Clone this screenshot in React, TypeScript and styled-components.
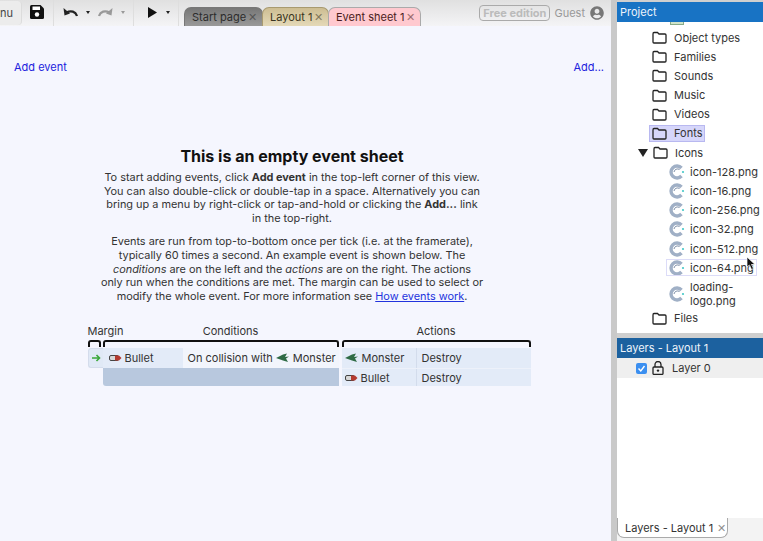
import React from 'react';
import styled, { createGlobalStyle } from 'styled-components';
import { FaUserCircle } from 'react-icons/fa';

const GlobalStyle = createGlobalStyle`
  html, body, #root {
    margin: 0;
    height: 100%;
  }
  body {
    overflow: hidden;
    font-family: Inter, "Liberation Sans", sans-serif;
    color: #333;
  }
`;

const Shell = styled.div`
  position: relative;
  width: 763px;
  height: 541px;
  display: grid;
  grid-template-columns: 611px 6px 146px;
  overflow: hidden;
  background: #f5f6fe;
`;

const MainPane = styled.div`
  display: flex;
  flex-direction: column;
  min-width: 0;
`;

const Toolbar = styled.div`
  height: 26px;
  display: flex;
  align-items: flex-end;
  background: linear-gradient(#e0e0e0, #f4f4f6);
  overflow: hidden;
`;

const MenuButton = styled.div`
  width: 22px;
  height: 24px;
  margin-bottom: 1px;
  flex: none;
  display: flex;
  align-items: center;
  justify-content: flex-start;
  background: #ececec;
  border-right: 1px solid #dcdcdc;
  border-radius: 0 4px 4px 0;
  box-sizing: border-box;
  font-size: 11px;
  color: #444;
`;

const ToolGroup = styled.div<{ $width: number; $pad: number; $gap: number }>`
  width: ${(p) => p.$width}px;
  height: 100%;
  flex: none;
  display: flex;
  align-items: center;
  gap: ${(p) => p.$gap}px;
  padding: 0 0 2px ${(p) => p.$pad}px;
  box-sizing: border-box;
  border-right: 1px solid #dedede;
`;

const Caret = styled.span<{ $faded?: boolean }>`
  width: 0;
  height: 0;
  border-left: 2px solid transparent;
  border-right: 2px solid transparent;
  border-top: 3px solid ${(p) => (p.$faded ? '#999' : '#222')};
`;

const Tabs = styled.div`
  display: flex;
  align-self: flex-end;
  margin-left: 5px;
`;

const Tab = styled.div<{ $bg: string; $fg: string; $border: string; $width: number }>`
  width: ${(p) => p.$width}px;
  height: 19px;
  box-sizing: border-box;
  padding: 0 5px 0 7px;
  margin-right: -1px;
  display: flex;
  align-items: center;
  justify-content: space-between;
  font-size: 11px;
  white-space: nowrap;
  color: ${(p) => p.$fg};
  background: ${(p) => p.$bg};
  border: 1px solid ${(p) => p.$border};
  border-bottom: 0;
  border-radius: 7px 7px 0 0;
`;

const TabClose = styled.span`
  font-size: 11px;
  opacity: 0.55;
`;

const Status = styled.div`
  margin-left: auto;
  align-self: center;
  display: flex;
  align-items: center;
  gap: 4px;
  padding-right: 7px;
  color: #999;
  font-size: 11px;
`;

const Badge = styled.span`
  height: 14px;
  padding: 0 3px;
  display: flex;
  align-items: center;
  border: 1.5px solid #aaa;
  border-radius: 4px;
  font-weight: 700;
  color: #bbb;
  font-size: 11px;
`;

const Guest = styled.span`
  margin-right: 1px;
`;

const Sheet = styled.div`
  flex: 1;
  display: flex;
  flex-direction: column;
  background: #f5f6fe;
`;

const AddRow = styled.div`
  display: flex;
  justify-content: space-between;
  padding: 34px 7px 0 14px;
  height: 87px;
`;

const AddLink = styled.a`
  font-size: 11px;
  line-height: 14px;
  color: #2222dd;
`;

const Help = styled.div`
  display: flex;
  flex-direction: column;
  align-items: center;
  padding-right: 27px;
`;

const Heading = styled.h2`
  margin: 0 0 5px;
  font-size: 16px;
  line-height: 19px;
  font-weight: 700;
  color: #111;
`;

const Para = styled.p`
  width: 400px;
  margin: 0 0 10px;
  text-align: center;
  font-size: 10.9px;
  line-height: 13.6px;
  color: #333;
`;

const HelpLink = styled.a`
  color: #2233dd;
  text-decoration: underline;
`;

const Diagram = styled.div`
  width: 443px;
  margin: 11px 0 0 34px;
  display: grid;
  grid-template-columns: 15px 236px 3px 189px;
  grid-template-rows: 15px 9px 20px 18px;
  font-size: 11px;
  color: #333;
`;

const Label = styled.div<{ $col: string; $shift?: number }>`
  grid-column: ${(p) => p.$col};
  grid-row: 1;
  padding-left: ${(p) => p.$shift ?? 0}px;
  text-align: center;
  white-space: nowrap;
  line-height: 14px;
`;

const MarginLabel = styled(Label)`
  text-align: left;
`;

const Bracket = styled.div<{ $col: string; $gapRight?: number }>`
  grid-column: ${(p) => p.$col};
  grid-row: 2;
  margin: 1px ${(p) => p.$gapRight ?? 0}px 0 0;
  border: 2px solid #111;
  border-bottom: 0;
  border-radius: 3px 3px 0 0;
  height: 5px;
`;

const MarginCell = styled.div`
  grid-column: 1;
  grid-row: 3;
  margin-right: -1px;
  display: flex;
  align-items: center;
  padding-left: 3px;
  background: #e0e9f6;
  border-radius: 3px 0 0 3px;
  border: 1px solid #d4dcec;
  border-right: 0;
`;

const ConditionRow = styled.div`
  grid-column: 2;
  grid-row: 3;
  display: grid;
  grid-template-columns: 80px 1fr;
  background: #e3ebf8;
`;

const ObjectCell = styled.div`
  display: flex;
  align-items: center;
  gap: 3px;
  padding-left: 6px;
`;

const ConditionText = styled.div`
  display: flex;
  align-items: center;
  gap: 3px;
  padding-left: 5px;
  background: #f2f5fc;
  white-space: nowrap;
`;

const ConditionFill = styled.div`
  grid-column: 2;
  grid-row: 4;
  background: #b8c8de;
  border-radius: 0 0 0 3px;
`;

const ActionRows = styled.div`
  grid-column: 4;
  grid-row: 3 / 5;
  display: grid;
  grid-template-rows: 20px 18px;
  background: #e3ebf8;
`;

const ActionRow = styled.div`
  display: grid;
  grid-template-columns: 74px 1fr;
  & + & {
    border-top: 1px solid #edf1fa;
  }
`;

const ActionName = styled.div`
  display: flex;
  align-items: center;
  padding-left: 5px;
  border-left: 1px solid #d3dcec;
`;

const ActionObject = styled(ObjectCell)`
  padding-left: 3px;
`;

const Divider = styled.div`
  background: #c9c9c9;
`;

const SidePane = styled.div`
  display: flex;
  flex-direction: column;
  background: #fff;
`;

const PanelHeader = styled.div<{ $dark?: boolean }>`
  height: 20px;
  flex: none;
  display: flex;
  align-items: center;
  padding-left: 3px;
  font-size: 11px;
  color: #eef4fb;
  background: ${(p) => (p.$dark ? '#1c619f' : '#1873c4')};
`;

const TopStrip = styled.div`
  height: 2px;
  flex: none;
  background: #cfcfcf;
`;

const Tree = styled.div`
  height: 311px;
  flex: none;
  overflow: hidden;
  font-size: 11px;
  color: #333;
`;

const ClippedRow = styled.div`
  height: 8px;
  overflow: hidden;
  display: flex;
  padding-left: 53px;
`;

const ClippedThumb = styled.span`
  width: 14px;
  height: 3px;
  background: #cfe3c9;
  border: 1px solid #88aa88;
  border-top: 0;
  box-sizing: border-box;
`;

const TreeRow = styled.div<{ $indent: number; $file?: boolean; $selected?: boolean; $focused?: boolean; $tall?: boolean }>`
  height: ${(p) => (p.$tall ? 30 : 15)}px;
  margin: 0 0 ${(p) => (p.$tall ? '1.2px' : '4.2px')} ${(p) => p.$indent}px;
  width: fit-content;
  padding: 0 2px;
  display: flex;
  align-items: center;
  gap: ${(p) => (p.$file ? 5 : 7)}px;
  line-height: 14px;
  background: ${(p) => (p.$selected ? '#d6d6fa' : 'transparent')};
  outline: ${(p) => (p.$selected ? '1px solid #b8b8f0' : p.$focused ? '1px solid #dcdcf8' : '0')};
  white-space: nowrap;
`;

const Arrow = styled.span`
  width: 0;
  height: 0;
  margin-right: -2px;
  border-left: 5px solid transparent;
  border-right: 5px solid transparent;
  border-top: 8px solid #222;
`;

const PanelGap = styled.div`
  height: 5px;
  flex: none;
  background: #cfcfcf;
`;

const LayerRow = styled.div`
  height: 20px;
  flex: none;
  display: flex;
  align-items: center;
  gap: 5px;
  padding-left: 19px;
  background: #efefef;
  font-size: 11px;
`;

const LayerName = styled.span`
  margin-left: 3px;
`;

const CheckBox = styled.span`
  width: 11px;
  height: 11px;
  border-radius: 2px;
  background: #3b8ff0;
  display: flex;
  align-items: center;
  justify-content: center;
`;

const LayerSpace = styled.div`
  flex: 1;
  background: #fff;
`;

const BottomTabs = styled.div`
  height: 23px;
  flex: none;
  background: #f3f3f3;
  display: flex;
`;

const BottomTab = styled.div`
  width: 111px;
  height: 20px;
  box-sizing: border-box;
  display: flex;
  align-items: center;
  gap: 4px;
  padding-left: 7px;
  background: #fff;
  border: 1px solid #aaa;
  border-top: 0;
  border-radius: 0 0 7px 7px;
  font-size: 11px;
  white-space: nowrap;
`;

const Cursor = styled.svg`
  position: absolute;
  left: 746px;
  top: 256px;
`;

const FolderIcon = () => (
  <svg width="15" height="13" viewBox="0 0 15 13">
    <path d="M1 3 V11 Q1 12 2 12 H13 Q14 12 14 11 V4 Q14 3 13 3 H7 L5.5 1.5 H2 Q1 1.5 1 3 Z" fill="none" stroke="#222" strokeWidth="1.3" />
  </svg>
);

const LogoIcon = () => (
  <svg width="16" height="16" viewBox="0 0 16 16">
    <path d="M12.5 4 A6 6 0 1 0 12.5 12" fill="none" stroke="#a0b0c6" strokeWidth="3.4" />
    <path d="M10.5 5.5 A3.6 3.6 0 0 0 5 8" fill="none" stroke="#7c8da6" strokeWidth="1" />
    <circle cx="14" cy="8" r="1.1" fill="#45c8c8" />
  </svg>
);

const BulletIcon = () => (
  <svg width="13" height="8" viewBox="0 0 13 8">
    <rect x="0.5" y="1.5" width="9" height="5" rx="1.5" fill="#d8d8d8" stroke="#444" />
    <path d="M6 1.5 H10 L12.5 4 L10 6.5 H6 Z" fill="#b43a30" />
  </svg>
);

const MonsterIcon = () => (
  <svg width="14" height="10" viewBox="0 0 14 10">
    <path d="M0 5 L7 1.5 L11 0.5 L9 4 L13 3.5 L10 5.5 L12 9 L7 7.5 Z" fill="#2f6b45" />
  </svg>
);

const GreenArrow = () => (
  <svg width="9" height="8" viewBox="0 0 9 8">
    <path d="M0 4 H7 M4.5 1 L7.5 4 L4.5 7" fill="none" stroke="#3aa83a" strokeWidth="1.6" />
  </svg>
);

const SaveIcon = () => (
  <svg width="14" height="14" viewBox="0 0 14 14">
    <path d="M1.5 0 H10.5 L14 3.5 V12.5 Q14 14 12.5 14 H1.5 Q0 14 0 12.5 V1.5 Q0 0 1.5 0 Z" fill="#111" />
    <rect x="2.5" y="1.5" width="7.5" height="3.5" fill="#fff" />
    <circle cx="7" cy="9.5" r="2.2" fill="#fff" />
  </svg>
);

const UndoIcon = ({ flip, color }: { flip?: boolean; color: string }) => (
  <svg width="15" height="10" viewBox="0 0 15 10" style={flip ? { transform: 'scaleX(-1)' } : undefined}>
    <path d="M14 9 C12.5 4.5 8 3 3.5 5.5" fill="none" stroke={color} strokeWidth="2.2" />
    <path d="M0.5 1 L1.5 8.5 L7 6.5 Z" fill={color} />
  </svg>
);

const PlayIcon = () => (
  <svg width="9" height="11" viewBox="0 0 9 11">
    <path d="M0 0 L9 5.5 L0 11 Z" fill="#111" />
  </svg>
);

const LockIcon = () => (
  <svg width="12" height="14" viewBox="0 0 12 14">
    <path d="M3 6 V3.5 A3 3 0 0 1 9 3.5 V6" fill="none" stroke="#222" strokeWidth="1.3" />
    <rect x="1" y="6" width="10" height="7.4" rx="1" fill="none" stroke="#222" strokeWidth="1.3" />
    <circle cx="6" cy="9.6" r="1.2" fill="#222" />
  </svg>
);

const folders = ['Object types', 'Families', 'Sounds', 'Music', 'Videos'];
const icons = ['icon-128.png', 'icon-16.png', 'icon-256.png', 'icon-32.png', 'icon-512.png'];

export default function App() {
  return (
    <Shell>
      <GlobalStyle />
      <MainPane>
        <Toolbar>
          <MenuButton>nu</MenuButton>
          <ToolGroup $width={32} $pad={8} $gap={0}>
            <SaveIcon />
          </ToolGroup>
          <ToolGroup $width={80} $pad={9} $gap={8}>
            <UndoIcon color="#222" />
            <Caret />
            <UndoIcon flip color="#999" />
            <Caret $faded />
          </ToolGroup>
          <ToolGroup $width={45} $pad={14} $gap={9}>
            <PlayIcon />
            <Caret />
          </ToolGroup>
          <Tabs>
            <Tab $width={79} $bg="linear-gradient(#777, #999)" $fg="#2c2c2c" $border="#777">
              Start page <TabClose>✕</TabClose>
            </Tab>
            <Tab $width={67} $bg="linear-gradient(#cdbd92, #e4d9b8)" $fg="#3a3420" $border="#a89a70">
              Layout 1 <TabClose>✕</TabClose>
            </Tab>
            <Tab $width={93} $bg="#ffc9cf" $fg="#4a1c20" $border="#aaa">
              Event sheet 1 <TabClose>✕</TabClose>
            </Tab>
          </Tabs>
          <Status>
            <Badge>Free edition</Badge>
            <Guest>Guest</Guest>
            <FaUserCircle size={14} color="#777" />
          </Status>
        </Toolbar>
        <Sheet>
          <AddRow>
            <AddLink>Add event</AddLink>
            <AddLink>Add...</AddLink>
          </AddRow>
          <Help>
            <Heading>This is an empty event sheet</Heading>
            <Para>
              To start adding events, click <b>Add event</b> in the top-left corner of this view.
              <br />
              You can also double-click or double-tap in a space. Alternatively you can
              <br />
              bring up a menu by right-click or tap-and-hold or clicking the <b>Add...</b> link
              <br />
              in the top-right.
            </Para>
            <Para>
              Events are run from top-to-bottom once per tick (i.e. at the framerate),
              <br />
              typically 60 times a second. An example event is shown below. The
              <br />
              <i>conditions</i> are on the left and the <i>actions</i> are on the right. The actions
              <br />
              only run when the conditions are met. The margin can be used to select or
              <br />
              modify the whole event. For more information see <HelpLink>How events work</HelpLink>.
            </Para>
            <Diagram>
              <MarginLabel $col="1">Margin</MarginLabel>
              <Label $col="2" $shift={20}>Conditions</Label>
              <Label $col="4">Actions</Label>
              <Bracket $col="1" $gapRight={2} />
              <Bracket $col="2" />
              <Bracket $col="4" />
              <MarginCell>
                <GreenArrow />
              </MarginCell>
              <ConditionRow>
                <ObjectCell>
                  <BulletIcon />
                  Bullet
                </ObjectCell>
                <ConditionText>
                  On collision with <MonsterIcon /> Monster
                </ConditionText>
              </ConditionRow>
              <ConditionFill />
              <ActionRows>
                <ActionRow>
                  <ActionObject>
                    <MonsterIcon />
                    Monster
                  </ActionObject>
                  <ActionName>Destroy</ActionName>
                </ActionRow>
                <ActionRow>
                  <ActionObject>
                    <BulletIcon />
                    Bullet
                  </ActionObject>
                  <ActionName>Destroy</ActionName>
                </ActionRow>
              </ActionRows>
            </Diagram>
          </Help>
        </Sheet>
      </MainPane>
      <Divider />
      <SidePane>
        <TopStrip />
        <PanelHeader>Project</PanelHeader>
        <Tree>
          <ClippedRow>
            <ClippedThumb />
          </ClippedRow>
          {folders.map((f) => (
            <TreeRow key={f} $indent={33}>
              <FolderIcon />
              {f}
            </TreeRow>
          ))}
          <TreeRow $indent={33} $selected>
            <FolderIcon />
            Fonts
          </TreeRow>
          <TreeRow $indent={19}>
            <Arrow />
            <FolderIcon />
            Icons
          </TreeRow>
          {icons.map((f) => (
            <TreeRow key={f} $indent={50} $file>
              <LogoIcon />
              {f}
            </TreeRow>
          ))}
          <TreeRow $indent={50} $file $focused>
            <LogoIcon />
            icon-64.png
          </TreeRow>
          <TreeRow $indent={50} $file $tall>
            <LogoIcon />
            <span>
              loading-
              <br />
              logo.png
            </span>
          </TreeRow>
          <TreeRow $indent={33}>
            <FolderIcon />
            Files
          </TreeRow>
        </Tree>
        <PanelGap />
        <PanelHeader $dark>Layers - Layout 1</PanelHeader>
        <LayerRow>
          <CheckBox>
            <svg width="9" height="9" viewBox="0 0 9 9">
              <path d="M1.5 4.5 L3.8 7 L7.5 2" fill="none" stroke="#fff" strokeWidth="1.4" />
            </svg>
          </CheckBox>
          <LockIcon />
          <LayerName>Layer 0</LayerName>
        </LayerRow>
        <LayerSpace />
        <BottomTabs>
          <BottomTab>
            Layers - Layout 1 <TabClose>✕</TabClose>
          </BottomTab>
        </BottomTabs>
      </SidePane>
      <Cursor width="11" height="15" viewBox="0 0 11 15">
        <path d="M1 1 L1 11 L3.5 9 L5.5 13.5 L7.5 12.5 L5.5 8.5 L9 8.5 Z" fill="#111" stroke="#fff" strokeWidth="0.7" />
      </Cursor>
    </Shell>
  );
}
